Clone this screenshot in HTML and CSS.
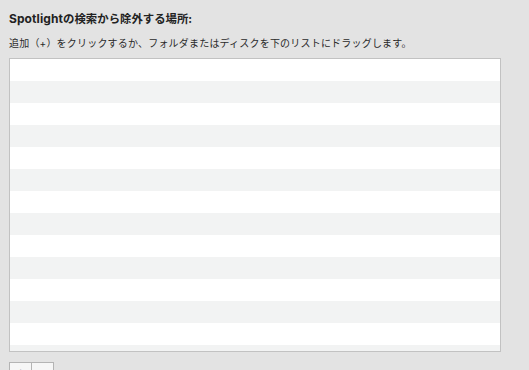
FILE: index.html
```html
<!DOCTYPE html>
<html lang="ja">
<head>
<meta charset="utf-8">
<link rel="stylesheet" href="styles.css">
</head>
<body>
<div class="pane">
  <h1 class="title"><span class="latin">Spotlight</span>の検索から除外する場所:</h1>
  <p class="desc">追加（+）をクリックするか、フォルダまたはディスクを下のリストにドラッグします。</p>
  <div class="list"></div>
  <div class="buttons">
    <button class="btn">+</button><button class="btn">−</button>
  </div>
</div>
</body>
</html>
```
FILE: styles.css
```css
html, body {
  margin: 0;
  padding: 0;
  background: #e3e3e3;
}
.pane {
  padding: 11px 0 0 9px;
  font-family: Inter, "Noto Sans CJK JP", sans-serif;
  color: #222;
}
.title {
  margin: 0;
  font-size: 11.4px;
  font-weight: 700;
  line-height: 16px;
  height: 16px;
}
.latin {
  font-size: 12px;
  letter-spacing: 0.1px;
}
.desc {
  margin: 9px 0 0 0;
  font-size: 10px;
  letter-spacing: 0.2px;
  line-height: 14px;
  height: 14px;
  color: #2a2a2a;
}
.list {
  margin-top: 8px;
  width: 490px;
  height: 292px;
  border: 1px solid #c2c2c2;
  background: repeating-linear-gradient(to bottom, #ffffff 0, #ffffff 22px, #f2f3f3 22px, #f2f3f3 44px);
}
.buttons {
  margin-top: 10px;
  display: flex;
}
.btn {
  width: 23px;
  height: 22px;
  margin: 0;
  padding: 0;
  border: 1px solid #b4b4b4;
  background: #f6f6f6;
  font-family: "Liberation Sans", sans-serif;
  font-size: 13px;
  line-height: 18px;
  color: #333;
}
.btn + .btn {
  width: 22px;
  border-left: none;
}
```
